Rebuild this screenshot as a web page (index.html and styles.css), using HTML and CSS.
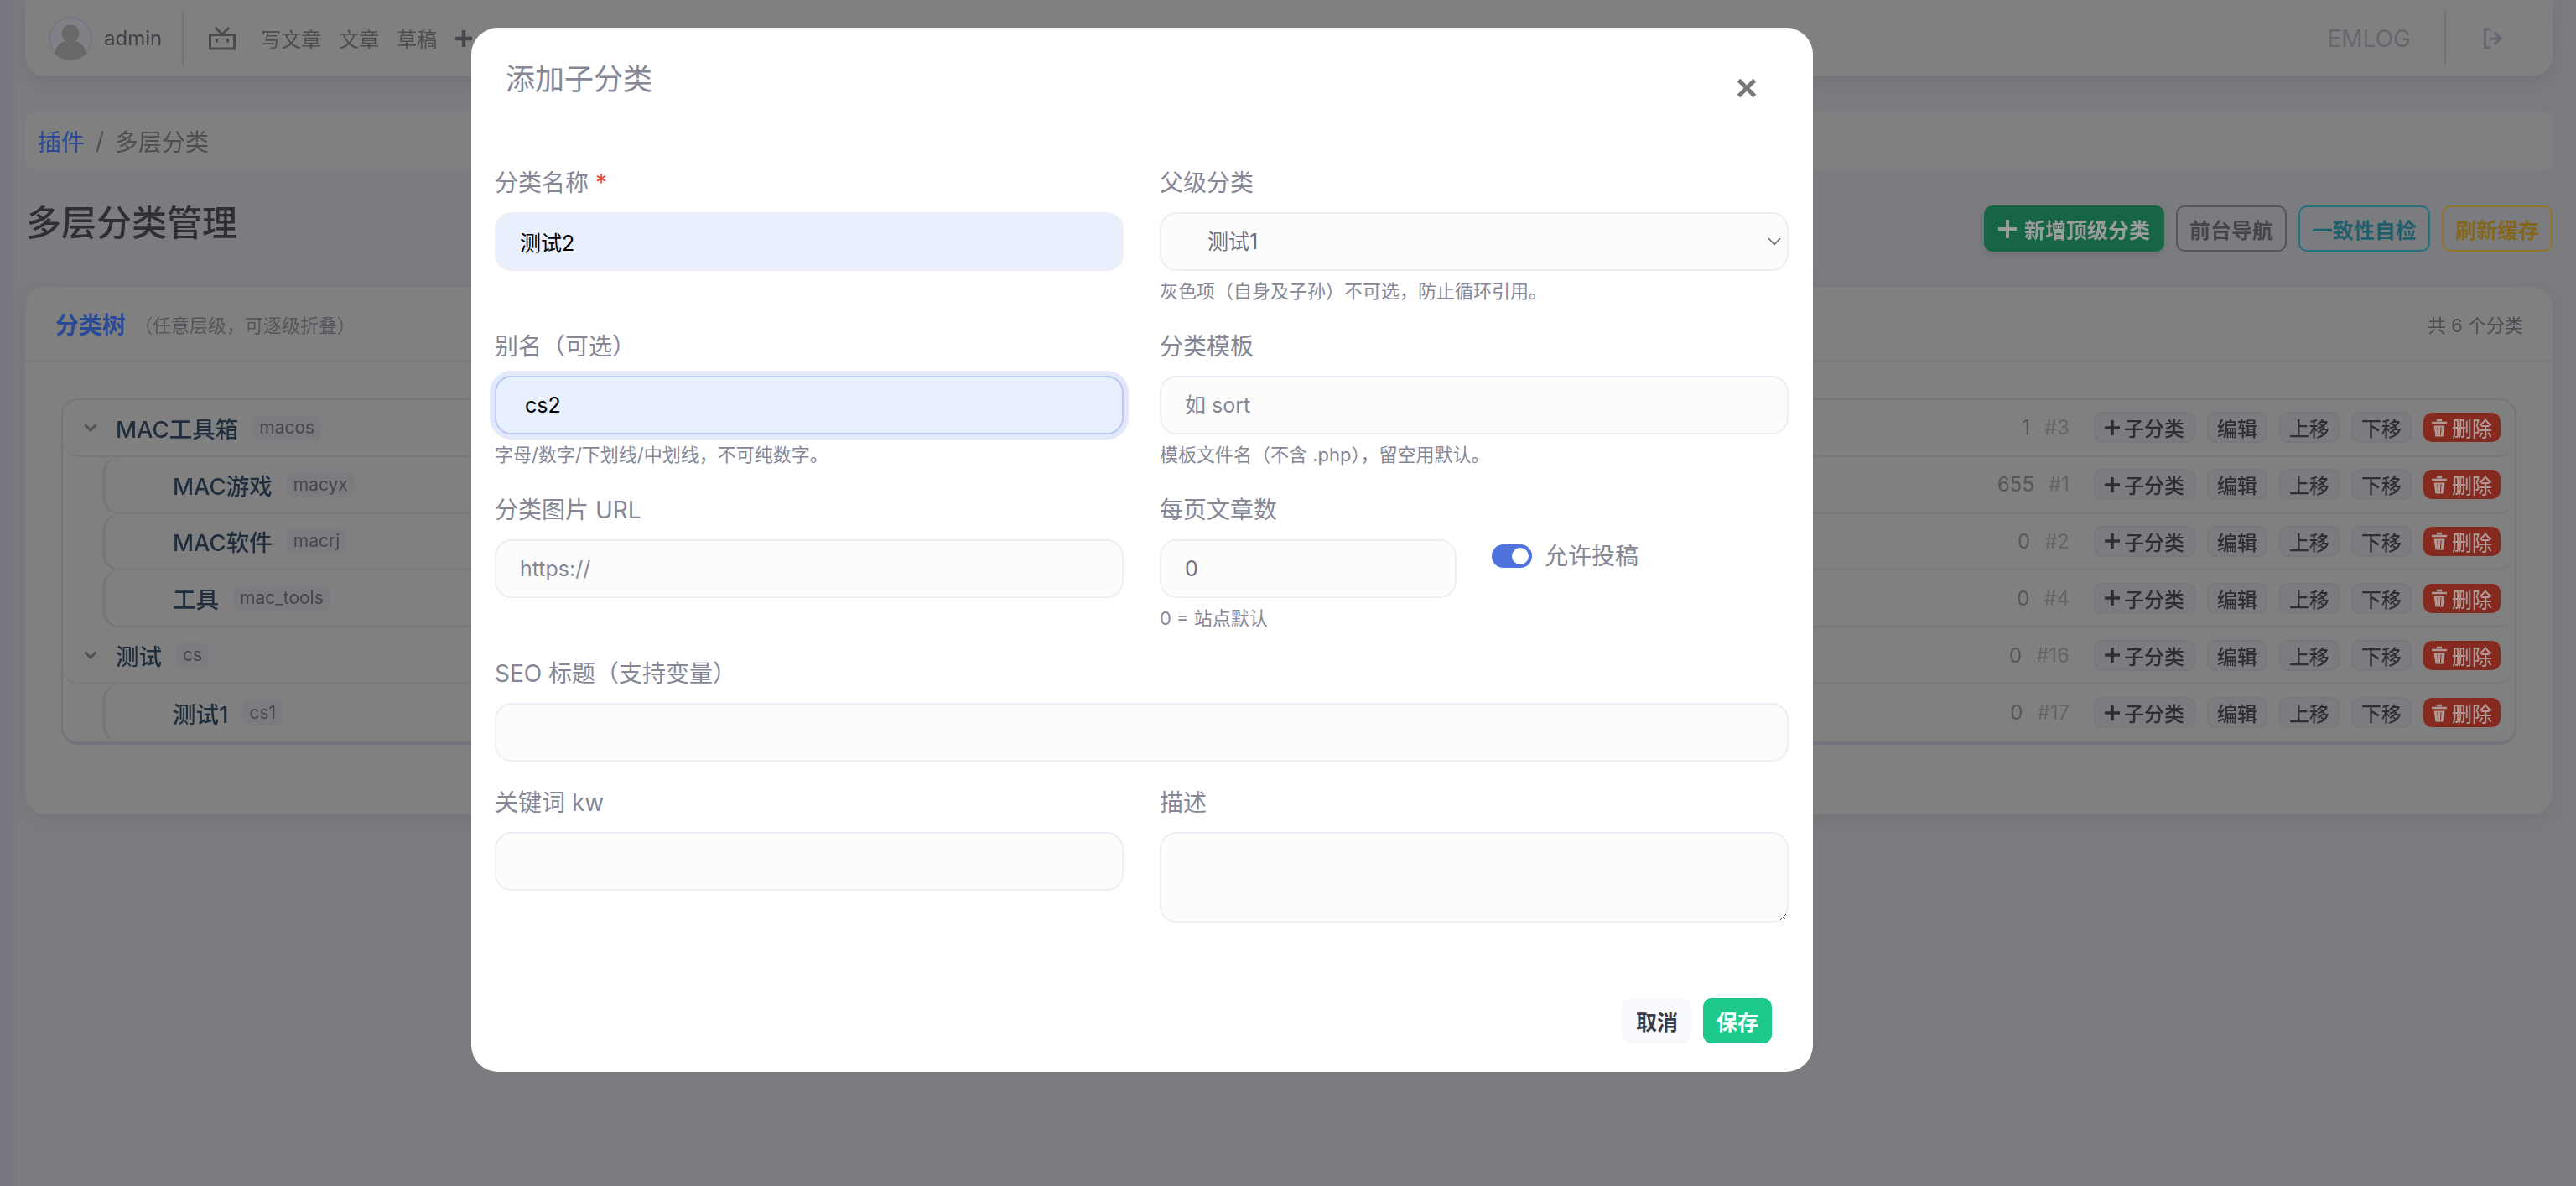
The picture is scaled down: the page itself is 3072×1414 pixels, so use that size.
FILE: index.html
```html
<!DOCTYPE html>
<html lang="zh-CN">
<head>
    <meta charset="UTF-8">
    <title>多层分类管理</title>
    <link rel="stylesheet" href="styles.css">
</head>
<body>
    <div class="page">
        <header class="topbar">
            <div class="avatar">
                <svg viewBox="0 0 52 52" width="52" height="52"><circle cx="26" cy="20" r="10.5" fill="#696866"/><ellipse cx="26" cy="44" rx="18.5" ry="16" fill="#696866"/></svg>
            </div>
            <span class="user-name">admin</span>
            <span class="topbar-line"></span>
            <svg class="tv-icon" viewBox="0 0 32 28" width="32" height="28"><path d="M8 1l8 8 8-8" fill="none" stroke="#4a4b4e" stroke-width="3"/><rect x="1.5" y="9.5" width="29" height="16.5" fill="none" stroke="#4a4b4e" stroke-width="3"/><path d="M9.5 14.5v4M22.5 14.5v4" stroke="#4a4b4e" stroke-width="3"/></svg>
            <nav class="topnav">
                <a>写文章</a>
                <a>文章</a>
                <a>草稿</a>
                <svg viewBox="0 0 22 22" width="22" height="22"><path d="M11 1v20M1 11h20" stroke="#48494c" stroke-width="4.5"/></svg>
            </nav>
            <span class="brand">EMLOG</span>
            <span class="topbar-line brand-line"></span>
            <svg class="logout-icon" viewBox="0 0 24 26" width="24" height="26"><path d="M9 2H2.500v22H9" fill="none" stroke="#65666e" stroke-width="3"/><path d="M8 13h12M14 6l7 7-7 7" fill="none" stroke="#65666e" stroke-width="3"/></svg>
        </header>

        <div class="breadcrumb">
            <a>插件</a>
            <span class="crumb-sep">/</span>
            <span>多层分类</span>
        </div>

        <div class="title-row">
            <h1>多层分类管理</h1>
            <div class="title-actions">
                <button class="btn-main">
                    <svg viewBox="0 0 22 22" width="22" height="22"><path d="M11 0v22M0 11h22" stroke="#9a9d9b" stroke-width="4"/></svg>
                    新增顶级分类
                </button>
                <button class="btn-line line-gray">前台导航</button>
                <button class="btn-line line-teal">一致性自检</button>
                <button class="btn-line line-gold">刷新缓存</button>
            </div>
        </div>

        <section class="card">
            <div class="card-header">
                <strong>分类树</strong>
                <small>（任意层级，可逐级折叠）</small>
                <span class="total">共 6 个分类</span>
            </div>
            <div class="card-body">
                <div class="tree">
                    <div class="row root">
                        <svg class="chevron" viewBox="0 0 16 10" width="16" height="10"><path d="M1.500 1.500L8 8l6.500-6.500" fill="none" stroke="#505154" stroke-width="3"/></svg>
                        <span class="name">MAC工具箱</span><span class="slug">macos</span>
                        <span class="meta"><span>1</span><em>#3</em></span>
                        <div class="actions">
                            <button class="btn-sm btn-add"><svg viewBox="0 0 18 18" width="18" height="18"><path d="M9 0v18M0 9h18" stroke="#2d2e33" stroke-width="3.500"/></svg>子分类</button>
                            <button class="btn-sm">编辑</button><button class="btn-sm">上移</button><button class="btn-sm">下移</button>
                            <button class="btn-del"><svg viewBox="0 0 18 22" width="18" height="22"><path d="M6 2h6M0 5h18" stroke="#ad9a96" stroke-width="2.500"/><path d="M2 8h14l-2 14H4zM7 10l.5 10M11 10l-.5 10" fill="#ad9a96" stroke="#862a1f" stroke-width="1"/></svg>删除</button>
                        </div>
                    </div>
                    <div class="row child">
                        <span class="name">MAC游戏</span><span class="slug">macyx</span>
                        <span class="meta"><span>655</span><em>#1</em></span>
                        <div class="actions">
                            <button class="btn-sm btn-add"><svg viewBox="0 0 18 18" width="18" height="18"><path d="M9 0v18M0 9h18" stroke="#2d2e33" stroke-width="3.500"/></svg>子分类</button>
                            <button class="btn-sm">编辑</button><button class="btn-sm">上移</button><button class="btn-sm">下移</button>
                            <button class="btn-del"><svg viewBox="0 0 18 22" width="18" height="22"><path d="M6 2h6M0 5h18" stroke="#ad9a96" stroke-width="2.500"/><path d="M2 8h14l-2 14H4zM7 10l.5 10M11 10l-.5 10" fill="#ad9a96" stroke="#862a1f" stroke-width="1"/></svg>删除</button>
                        </div>
                    </div>
                    <div class="row child">
                        <span class="name">MAC软件</span><span class="slug">macrj</span>
                        <span class="meta"><span>0</span><em>#2</em></span>
                        <div class="actions">
                            <button class="btn-sm btn-add"><svg viewBox="0 0 18 18" width="18" height="18"><path d="M9 0v18M0 9h18" stroke="#2d2e33" stroke-width="3.500"/></svg>子分类</button>
                            <button class="btn-sm">编辑</button><button class="btn-sm">上移</button><button class="btn-sm">下移</button>
                            <button class="btn-del"><svg viewBox="0 0 18 22" width="18" height="22"><path d="M6 2h6M0 5h18" stroke="#ad9a96" stroke-width="2.500"/><path d="M2 8h14l-2 14H4zM7 10l.5 10M11 10l-.5 10" fill="#ad9a96" stroke="#862a1f" stroke-width="1"/></svg>删除</button>
                        </div>
                    </div>
                    <div class="row child">
                        <span class="name">工具</span><span class="slug">mac_tools</span>
                        <span class="meta"><span>0</span><em>#4</em></span>
                        <div class="actions">
                            <button class="btn-sm btn-add"><svg viewBox="0 0 18 18" width="18" height="18"><path d="M9 0v18M0 9h18" stroke="#2d2e33" stroke-width="3.500"/></svg>子分类</button>
                            <button class="btn-sm">编辑</button><button class="btn-sm">上移</button><button class="btn-sm">下移</button>
                            <button class="btn-del"><svg viewBox="0 0 18 22" width="18" height="22"><path d="M6 2h6M0 5h18" stroke="#ad9a96" stroke-width="2.500"/><path d="M2 8h14l-2 14H4zM7 10l.5 10M11 10l-.5 10" fill="#ad9a96" stroke="#862a1f" stroke-width="1"/></svg>删除</button>
                        </div>
                    </div>
                    <div class="row root">
                        <svg class="chevron" viewBox="0 0 16 10" width="16" height="10"><path d="M1.500 1.500L8 8l6.500-6.500" fill="none" stroke="#505154" stroke-width="3"/></svg>
                        <span class="name">测试</span><span class="slug">cs</span>
                        <span class="meta"><span>0</span><em>#16</em></span>
                        <div class="actions">
                            <button class="btn-sm btn-add"><svg viewBox="0 0 18 18" width="18" height="18"><path d="M9 0v18M0 9h18" stroke="#2d2e33" stroke-width="3.500"/></svg>子分类</button>
                            <button class="btn-sm">编辑</button><button class="btn-sm">上移</button><button class="btn-sm">下移</button>
                            <button class="btn-del"><svg viewBox="0 0 18 22" width="18" height="22"><path d="M6 2h6M0 5h18" stroke="#ad9a96" stroke-width="2.500"/><path d="M2 8h14l-2 14H4zM7 10l.5 10M11 10l-.5 10" fill="#ad9a96" stroke="#862a1f" stroke-width="1"/></svg>删除</button>
                        </div>
                    </div>
                    <div class="row child last">
                        <span class="name">测试1</span><span class="slug">cs1</span>
                        <span class="meta"><span>0</span><em>#17</em></span>
                        <div class="actions">
                            <button class="btn-sm btn-add"><svg viewBox="0 0 18 18" width="18" height="18"><path d="M9 0v18M0 9h18" stroke="#2d2e33" stroke-width="3.500"/></svg>子分类</button>
                            <button class="btn-sm">编辑</button><button class="btn-sm">上移</button><button class="btn-sm">下移</button>
                            <button class="btn-del"><svg viewBox="0 0 18 22" width="18" height="22"><path d="M6 2h6M0 5h18" stroke="#ad9a96" stroke-width="2.500"/><path d="M2 8h14l-2 14H4zM7 10l.5 10M11 10l-.5 10" fill="#ad9a96" stroke="#862a1f" stroke-width="1"/></svg>删除</button>
                        </div>
                    </div>
                </div>
            </div>
        </section>
    </div>

    <div class="modal-wrap">
        <div class="modal">
            <div class="modal-header">
                <h2>添加子分类</h2>
                <svg class="modal-close" viewBox="0 0 22 22" width="22" height="22"><path d="M1.500 1.500l19 19M20.500 1.500l-19 19" stroke="#777" stroke-width="5"/></svg>
            </div>
            <form class="modal-body">
                <div class="field">
                    <label>分类名称 <i>*</i></label>
                    <input class="filled" type="text" value="测试2">
                </div>
                <div class="field">
                    <label>父级分类</label>
                    <div class="select-wrap">
                        <select><option>测试1</option></select>
                        <svg viewBox="0 0 16 10" width="16" height="10"><path d="M1 1l7 7.500L15 1" fill="none" stroke="#6e707e" stroke-width="1.800"/></svg>
                    </div>
                    <p class="hint">灰色项（自身及子孙）不可选，防止循环引用。</p>
                </div>
                <div class="field">
                    <label>别名（可选）</label>
                    <input class="filled focused" type="text" value="cs2">
                    <p class="hint">字母/数字/下划线/中划线，不可纯数字。</p>
                </div>
                <div class="field">
                    <label>分类模板</label>
                    <input type="text" placeholder="如 sort">
                    <p class="hint">模板文件名（不含 .php），留空用默认。</p>
                </div>
                <div class="field">
                    <label>分类图片 URL</label>
                    <input type="text" placeholder="https://">
                </div>
                <div class="field">
                    <label>每页文章数</label>
                    <div class="per-page">
                        <input type="text" value="0">
                        <span class="switch"></span>
                        <span class="switch-text">允许投稿</span>
                    </div>
                    <p class="hint">0 = 站点默认</p>
                </div>
                <div class="field wide">
                    <label>SEO 标题（支持变量）</label>
                    <input type="text">
                </div>
                <div class="field">
                    <label>关键词 kw</label>
                    <input type="text">
                </div>
                <div class="field">
                    <label>描述</label>
                    <textarea></textarea>
                </div>
            </form>
            <div class="modal-footer">
                <button class="btn-cancel">取消</button>
                <button class="btn-save">保存</button>
            </div>
        </div>
    </div>
</body>
</html>
```

FILE: styles.css
```css
* {
    box-sizing: border-box;
}
html, body {
    height: 100%;
}
body {
    margin: 0;
    overflow: hidden;
    background: linear-gradient(to right, #74757d, #7b7c7f 24px);
    font-family: Inter, "Noto Sans CJK SC", sans-serif;
    color: #45464a;
}
button {
    font-family: inherit;
    cursor: pointer;
}
.page {
    padding: 0 28px 0 30px;
    filter: blur(0.5px);
}

/* top bar */
.topbar {
    display: flex;
    align-items: center;
    height: 91px;
    padding: 0 59px 0 28px;
    background: #808080;
    border-radius: 0 0 24px 24px;
    box-shadow: 0 6px 20px rgba(50, 50, 60, 0.12);
}
.avatar {
    width: 52px;
    height: 52px;
    border-radius: 50%;
    overflow: hidden;
    background: #808187;
    box-shadow: inset 0 0 0 2px #76777f;
}
.avatar svg {
    display: block;
}
.user-name {
    margin-left: 14px;
    font-size: 24px;
    color: #3f4045;
}
.topbar-line {
    width: 2px;
    height: 65px;
    margin-left: 24px;
    background: #727377;
}
.brand-line {
    margin-left: 40px;
}
.tv-icon {
    margin-left: 30px;
}
.topnav {
    display: flex;
    align-items: center;
    gap: 21px;
    margin-left: 30px;
    font-size: 24px;
    color: #4d4e50;
}
.brand {
    margin-left: auto;
    font-size: 28px;
    color: #65666e;
}
.logout-icon {
    margin-left: 44px;
}

/* breadcrumb */
.breadcrumb {
    display: flex;
    align-items: center;
    height: 70px;
    margin-top: 42px;
    padding-left: 15px;
    background: #808080;
    border-radius: 14px;
    font-size: 28px;
    color: #4d4e52;
}
.breadcrumb a {
    color: #2a4a98;
}
.crumb-sep {
    margin: 0 13px;
}

/* title */
.title-row {
    display: flex;
    justify-content: space-between;
    align-items: flex-start;
    height: 55px;
    margin-top: 42px;
}
h1 {
    margin: -8px 0 0 1px;
    font-size: 42px;
    line-height: 58px;
    font-weight: 500;
    color: #2e2f34;
}
.title-actions {
    display: flex;
    gap: 14px;
}
.btn-main, .btn-line {
    display: flex;
    align-items: center;
    height: 55px;
    border-radius: 10px;
    font-size: 25px;
    font-weight: 700;
}
.btn-main {
    gap: 9px;
    padding: 0 17px;
    border: none;
    background: #166646;
    color: #9a9d9b;
    box-shadow: 0 4px 8px rgba(50, 50, 60, 0.15);
}
.btn-line {
    padding: 0 14px;
    border: 2px solid;
    background: none;
}
.line-gray {
    border-color: #54545c;
    color: #45464c;
}
.line-teal {
    border-color: #257080;
    color: #1f5f6c;
}
.line-gold {
    border-color: #947424;
    color: #84661e;
}

/* tree card */
.card {
    height: 629px;
    margin-top: 42px;
    background: #808080;
    border-radius: 24px;
    box-shadow: 0 6px 24px rgba(50, 50, 60, 0.1);
}
.card-header {
    display: flex;
    align-items: center;
    height: 90px;
    padding: 0 35px 0 36px;
    border-bottom: 2px solid #77787b;
}
.card-header strong {
    font-size: 28px;
    font-weight: 700;
    color: #2a4a98;
}
.card-header small {
    margin-left: 10px;
    font-size: 22px;
    color: #55565b;
}
.total {
    margin-left: auto;
    font-size: 22px;
    color: #4c4d53;
}
.card-body {
    padding: 43px 43px 0;
}
.tree {
    border: 2px solid #74757a;
    border-bottom-width: 4px;
    border-radius: 20px;
}
.row {
    display: flex;
    align-items: center;
    height: 67.8px;
    padding-right: 17px;
    border-bottom: 2px solid #77787b;
    border-radius: 0 0 20px 20px;
}
.row.last {
    border-bottom: none;
}
.root {
    padding-left: 25px;
}
.child {
    margin-left: 47px;
    padding-left: 80px;
    border-left: 4px solid #75767a;
    border-radius: 20px;
}
.chevron {
    margin-right: 22px;
}
.name {
    font-size: 27.5px;
    font-weight: 500;
    color: #1f2d3d;
}
.slug {
    margin-left: 17px;
    padding: 0 8px;
    height: 30px;
    line-height: 30px;
    border-radius: 8px;
    background: #7b7c80;
    font-size: 21px;
    color: #45464a;
}
.meta {
    display: flex;
    gap: 17px;
    margin-left: auto;
    margin-right: 29px;
    font-size: 24px;
    color: #55565a;
}
.meta em {
    font-style: normal;
    color: #636468;
}
.actions {
    display: flex;
    align-items: center;
    gap: 14px;
}
.btn-sm, .btn-del {
    display: flex;
    align-items: center;
    justify-content: center;
    border-radius: 10px;
    font-size: 24px;
    font-weight: 500;
}
.btn-sm {
    width: 72px;
    height: 37px;
    padding: 0;
    background: #7b7c7f;
    border: 2px solid #77787c;
    color: #2d2e33;
}
.btn-add {
    width: 121px;
    gap: 5px;
}
.btn-del {
    gap: 6px;
    width: 92px;
    height: 35px;
    padding: 0;
    border: none;
    background: #862a1f;
    color: #ad9a96;
}

/* modal */
.modal-wrap {
    position: fixed;
    top: 0;
    left: 0;
    width: 100%;
    height: 100%;
    padding: 33px 0 0 562px;
}
.modal {
    width: 1600px;
    height: 1245px;
    background: #fff;
    border-radius: 32px;
}
.modal-header {
    display: flex;
    justify-content: space-between;
    height: 164px;
    padding: 36px 68px 0 41px;
}
h2 {
    margin: 0;
    font-size: 35px;
    line-height: 50px;
    font-weight: 400;
    color: #858796;
}
.modal-close {
    margin-top: 25px;
}
.modal-body {
    display: grid;
    grid-template-columns: 750px 750px;
    column-gap: 43px;
    row-gap: 28px;
    align-items: start;
    padding: 0 28px;
}
.field {
    min-height: 125px;
}
.wide {
    grid-column: 1 / 3;
}
label {
    display: block;
    height: 42px;
    margin-bottom: 14px;
    font-size: 28px;
    line-height: 42px;
    color: #858796;
}
label i {
    font-style: normal;
    color: #e74a3b;
}
input, select, textarea {
    display: block;
    width: 100%;
    height: 70px;
    padding: 0 28px;
    border: 2px solid #eeeef6;
    border-radius: 20px;
    background: #fcfcfd;
    outline: none;
    font-family: inherit;
    font-size: 25px;
    color: #6e707e;
}
input::placeholder {
    color: #858796;
    opacity: 1;
}
input.filled {
    background: #e8f0fe;
    color: #000;
}
input.focused {
    padding-left: 34px;
    border-color: #bac8f3;
    box-shadow: 0 0 0 6px #e3e9fb;
}
.select-wrap {
    position: relative;
}
select {
    padding-left: 55px;
    appearance: none;
}
.select-wrap svg {
    position: absolute;
    right: 9px;
    top: 30px;
}
textarea {
    height: 108px;
}
.hint {
    height: 34px;
    margin: 7px 0 0;
    font-size: 22px;
    line-height: 34px;
    color: #858796;
}
.per-page {
    display: flex;
    align-items: flex-start;
}
.per-page input {
    width: 354px;
}
.switch {
    position: relative;
    width: 48px;
    height: 28px;
    margin: 6px 0 0 42px;
    border-radius: 14px;
    background: #4e73df;
}
.switch::after {
    content: "";
    position: absolute;
    top: 4px;
    right: 4px;
    width: 20px;
    height: 20px;
    border-radius: 50%;
    background: #fff;
}
.switch-text {
    margin-left: 15px;
    font-size: 28px;
    line-height: 40px;
    color: #858796;
}
.modal-footer {
    display: flex;
    justify-content: flex-end;
    gap: 14px;
    margin-top: 90px;
    padding-right: 49px;
}
.modal-footer button {
    width: 82px;
    height: 54px;
    padding: 0;
    border-radius: 10px;
    font-size: 25px;
    font-weight: 700;
}
.btn-cancel {
    border: none;
    background: #f8f9fc;
    color: #3a3b45;
}
.btn-save {
    border: 1px solid #1cc88a;
    background: #1cc88a;
    color: #fff;
}
```
